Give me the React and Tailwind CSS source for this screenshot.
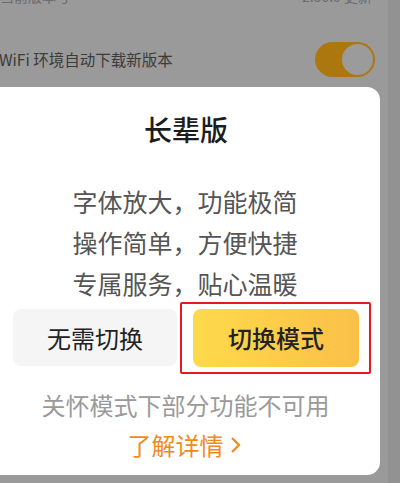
import React from "react";

const font = { fontFamily: '"Noto Sans CJK SC", "Noto Sans", sans-serif' };

const Toggle = () => (
  <div className="w-[60px] h-[35px] rounded-full bg-[#ad770f] p-[2px] flex justify-end">
    <div className="w-[31px] h-[31px] rounded-full bg-[#9b9b9b]" />
  </div>
);

export default function App() {
  return (
    <div
      className="w-[400px] h-[483px] overflow-hidden bg-[#9a9a9a] flex flex-col relative"
      style={font}
    >
      <div className="absolute right-0 top-0 bottom-0 w-[12px] bg-[#929292]" />
      <div className="h-[6px] overflow-hidden flex justify-between pr-[28px] text-[#6b6b6b] text-[14px] leading-none">
        <span className="-mt-[11px]">当前版本号</span>
        <span className="-mt-[11px]">2.30.0 更新</span>
      </div>

      <div className="h-[81px] pt-[36px] flex items-start justify-between pr-[25px]">
        <span className="text-[15.5px] text-[#3b3b3b] -ml-[1px] mt-[6px]">WiFi 环境自动下载新版本</span>
        <Toggle />
      </div>

      <div className="relative w-[392px] -ml-[12px] h-[388px] bg-white rounded-[13px] pl-[25px] pr-[21px] flex flex-col items-stretch">
        <div className="text-center text-[28px] font-medium text-[#1c1c1c] leading-none mt-[28px]">
          长辈版
        </div>
        <div className="flex flex-col items-center text-[25px] text-[#555555] leading-[43px] mt-[37px] pr-[2px]">
          <span>字体放大，功能极简</span>
          <span className="-mt-[2px]">操作简单，方便快捷</span>
          <span className="-mt-[2px]">专属服务，贴心温暖</span>
        </div>
        <div className="flex gap-[16px] mt-[4px]">
          <button className="w-[164px] h-[57px] rounded-[8px] bg-[#f5f5f5] text-[24px] text-[#222222]">
            无需切换
          </button>
          <div className="relative">
            <button className="w-[166px] h-[58px] rounded-[8px] bg-gradient-to-r from-[#fdda4b] to-[#fbbf48] text-[24px] font-medium text-[#222222]">
              切换模式
            </button>
            <div className="absolute -left-[13px] -top-[7px] w-[191px] h-[72px] border-2 border-[#e5191f] rounded-[2px]" />
          </div>
        </div>
        <div className="text-center text-[24px] text-[#9a9a9a] mt-[26px] leading-none pr-[1px]">
          关怀模式下部分功能不可用
        </div>
        <div className="flex justify-center items-center text-[24px] text-[#f08a1b] mt-[16px] leading-none pr-[3px]">
          <span>了解详情</span>
          <svg width="12" height="18" viewBox="0 0 12 18" className="ml-[6px]">
            <path d="M2 2 L9 9 L2 16" fill="none" stroke="#f08a1b" strokeWidth="2.2" />
          </svg>
        </div>
      </div>
    </div>
  );
}
